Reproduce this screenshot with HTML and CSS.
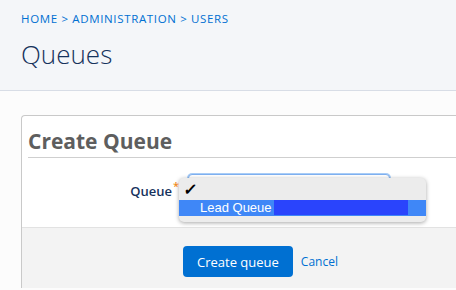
FILE: index.html
```html
<!DOCTYPE html>
<html lang="en">
<head>
  <meta charset="UTF-8">
  <title>Queues</title>
  <link rel="stylesheet" href="styles.css">
</head>
<body>
  <div class="page-header">
    <p class="crumbs">Home &gt; Administration &gt; Users</p>
    <h1>Queues</h1>
  </div>

  <div class="card">
    <h2>Create Queue</h2>
    <div class="form-row">
      <label class="field-label">Queue<span class="req">*</span></label>
      <div class="select-box"></div>
      <div class="menu">
        <div class="menu-item"><span class="check">&#10003;</span></div>
        <div class="menu-item active">Lead Queue<span class="redact"></span></div>
      </div>
    </div>
    <div class="card-footer">
      <button class="btn-primary">Create queue</button>
      <a class="link" href="#">Cancel</a>
    </div>
  </div>
</body>
</html>
```

FILE: styles.css
```css
body {
  margin: 0;
  background: #fcfcfc;
  font-family: "Open Sans", sans-serif;
  overflow: hidden;
  height: 290px;
}
.page-header {
  height: 90px;
  background: #f4f6f9;
  border-bottom: 1px solid #d8dde6;
  padding: 0 0 0 21px;
}
.crumbs {
  margin: 0;
  padding-top: 11px;
  font-size: 11.5px;
  line-height: 16px;
  text-transform: uppercase;
  letter-spacing: 0.65px;
  color: #0070d2;
}
h1 {
  margin: 11px 0 0;
  font-size: 26px;
  line-height: 32px;
  font-weight: 300;
  color: #16325c;
}
.card {
  margin: 24px 0 0 21px;
  background: #fff;
  border: 1px solid #c9c9c9;
  border-right: none;
  border-bottom: none;
  border-radius: 4px 0 0 0;
}
h2 {
  margin: 0 0 0 6px;
  padding-top: 10px;
  font-size: 21px;
  line-height: 31px;
  font-weight: 700;
  color: #5e5e5e;
  border-bottom: 1px solid #cfcfcf;
}
.form-row {
  position: relative;
  height: 69px;
  display: flex;
  align-items: flex-start;
}
.field-label {
  width: 157px;
  text-align: right;
  padding-top: 24px;
  font-size: 13px;
  font-weight: 600;
  color: #16325c;
}
.req {
  color: #f08a1c;
  font-size: 11px;
  vertical-align: top;
  margin-left: 1px;
  position: relative;
  top: -4px;
  z-index: 2;
}
.select-box {
  margin: 16px 0 0 9px;
  width: 200px;
  height: 24px;
  border: 1px solid #7fb0f0;
  border-radius: 4px;
  box-shadow: 0 0 0 1px #a9cdf7;
  background: #fff;
}
.menu {
  position: absolute;
  left: 157px;
  top: 20px;
  width: 247px;
  height: 44px;
  background: #ececec;
  border-radius: 5px;
  box-shadow: 0 1px 4px rgba(0, 0, 0, 0.35);
  font-family: "Liberation Sans", Arial, sans-serif;
  font-size: 13px;
  overflow: hidden;
}
.menu-item {
  height: 22px;
  line-height: 24px;
  padding-left: 21px;
  color: #000;
}
.menu-item.active {
  height: 16px;
  line-height: 16px;
  background: #3f87f7;
  color: #fff;
}
.check {
  display: inline-block;
  margin-left: -16px;
  font-size: 16px;
  font-weight: 700;
  transform: skewX(-8deg);
}
.redact {
  display: inline-block;
  vertical-align: top;
  margin-left: 2px;
  width: 134px;
  height: 15px;
  background: #2a44fc;
}
.card-footer {
  height: 61px;
  background: #f3f3f3;
  border-top: 1px solid #e2e2e2;
  padding: 18px 0 0 161px;
  box-sizing: border-box;
  display: flex;
  align-items: flex-start;
  gap: 8px;
}
.btn-primary {
  height: 31px;
  padding: 0 14px;
  background: #0070d2;
  color: #fff;
  border: none;
  border-radius: 4px;
  font-family: "Open Sans", sans-serif;
  font-size: 13px;
}
.link {
  line-height: 31px;
  font-size: 12px;
  color: #0070d2;
  text-decoration: none;
}
```
